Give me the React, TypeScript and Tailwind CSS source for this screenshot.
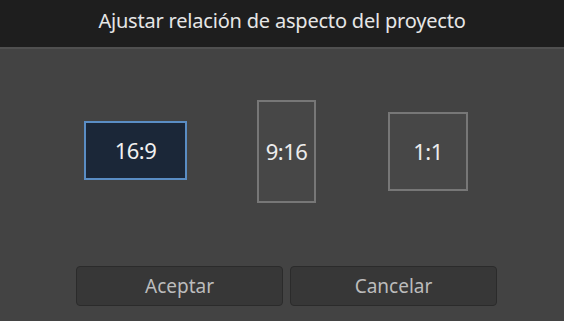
const options = [
  { label: "16:9", box: "w-[103px] h-[59px] mt-[21px]", selected: true },
  { label: "9:16", box: "w-[59px] h-[103px]", selected: false },
  { label: "1:1", box: "w-[80px] h-[79px] mt-[12px]", selected: false },
];

export default function App() {
  return (
    <div className="w-[564px] h-[321px] flex flex-col bg-[#434343] font-['Noto_Sans',sans-serif] overflow-hidden">
      <div className="h-[49px] bg-[#1e1e1e] border-b-2 border-[#505050] flex items-center justify-center pb-[6px]">
        <h1 className="text-[20px] text-[#e6e6e6] tracking-[-0.2px]">
          Ajustar relación de aspecto del proyecto
        </h1>
      </div>

      <div className="flex items-start pl-[84px] pt-[51px] h-[217px]">
        {options.map((o, i) => (
          <div
            key={o.label}
            className={`${o.box} ${i === 1 ? "ml-[70px]" : ""} ${i === 2 ? "ml-[72px]" : ""} flex items-center justify-center text-[22px] tracking-[-0.5px] ${
              o.selected
                ? "bg-[#1b2738] border-2 border-[#5a8dc4] text-[#f0f0f0]"
                : "bg-[#474747] border-2 border-[#777777] text-[#ececec]"
            }`}
          >
            {o.label}
          </div>
        ))}
      </div>

      <div className="flex gap-[7px] pl-[76px]">
        {["Aceptar", "Cancelar"].map((t) => (
          <button
            key={t}
            className="w-[207px] h-[40px] rounded-[4px] bg-[#373737] border border-[#2b2b2b] text-[19px] text-[#bcbcbc] flex items-center justify-center"
          >
            {t}
          </button>
        ))}
      </div>
    </div>
  );
}
